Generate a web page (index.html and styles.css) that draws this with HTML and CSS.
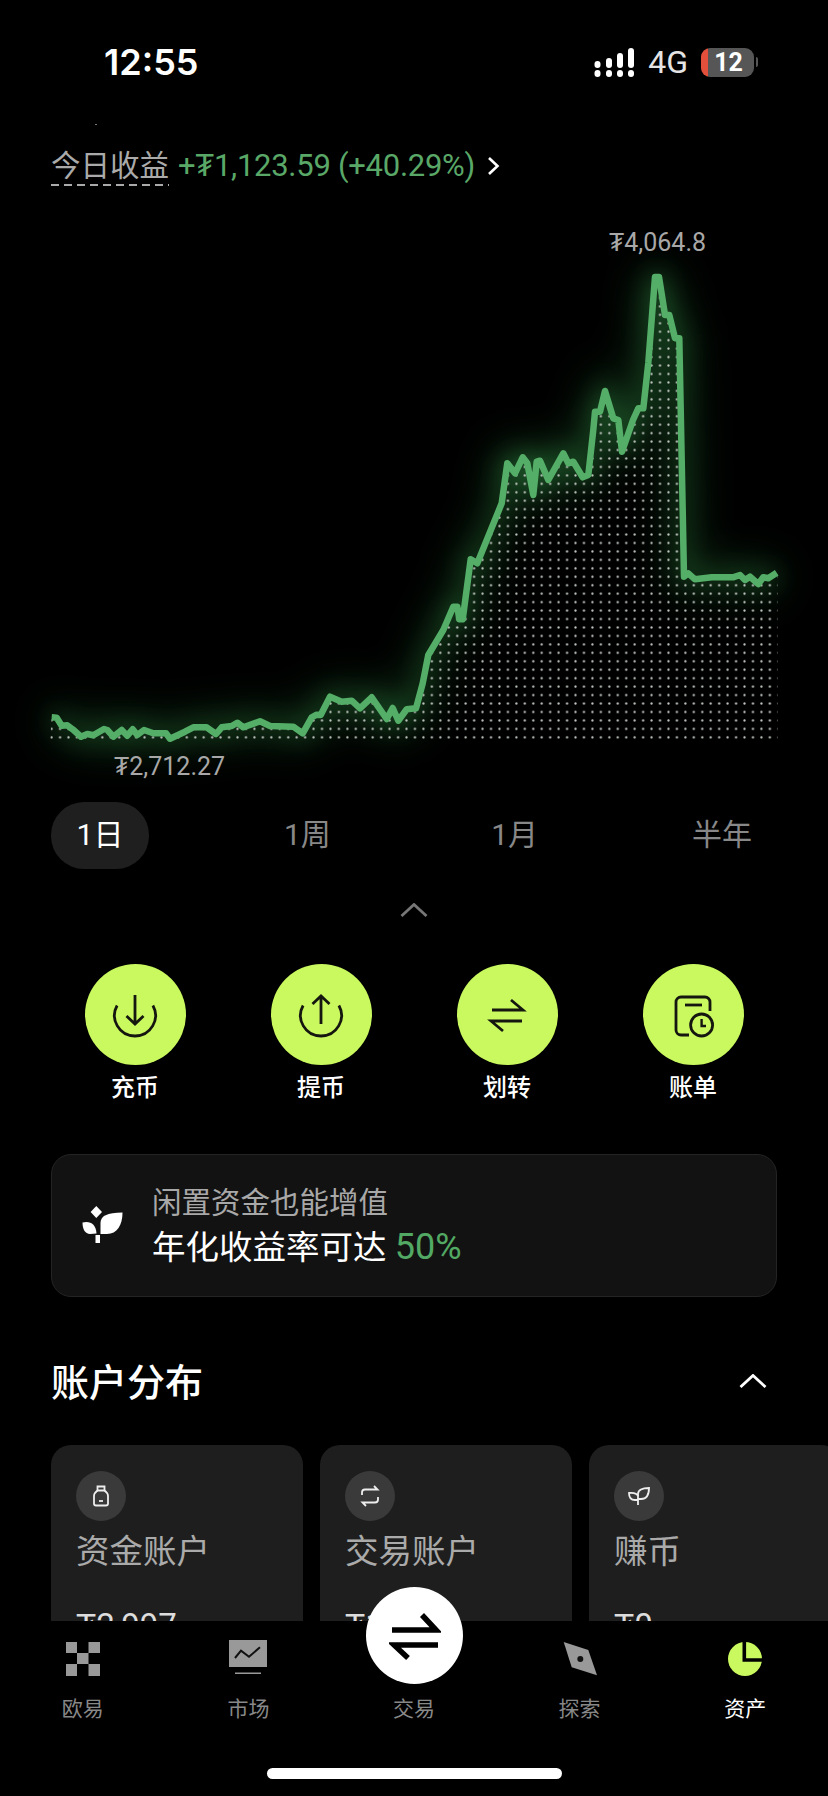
FILE: index.html
```html
<!DOCTYPE html>
<html>
  <head>
    <meta charset="utf-8" />
    <title>资产</title>
    <link rel="stylesheet" href="styles.css">
  </head>

  <body>
    <div id="screen">
      <div class="status-bar">
        <span class="status-time">12:55</span>
        <div class="status-right">
          <svg class="signal" viewBox="0 0 41 29" width="41" height="29">
            <g fill="#fff">
              <rect x="0.5" y="13" width="6" height="7" rx="3"/><rect x="0.5" y="22" width="6" height="7" rx="3"/>
              <rect x="12" y="10" width="6" height="10" rx="3"/><rect x="12" y="22" width="6" height="7" rx="3"/>
              <rect x="23" y="5" width="6" height="15" rx="3"/><rect x="23" y="22" width="6" height="7" rx="3"/>
              <rect x="34" y="0" width="6" height="20" rx="3"/><rect x="34" y="22" width="6" height="7" rx="3"/>
            </g>
          </svg>
          <span class="network">4G</span>
          <div class="battery"><span class="battery-num">12</span></div>
          <span class="battery-nub"></span>
        </div>
      </div>
      <span class="speck"></span>

      <div class="summary">
        <span class="summary-label">今日收益</span>
        <span class="summary-value">+₮1,123.59 (+40.29%)</span>
        <svg class="summary-arrow" viewBox="0 0 13 20" width="13" height="20">
          <path d="M2 2 L10.5 10 L2 18" fill="none" stroke="#fff" stroke-width="2.6"/>
        </svg>
      </div>

      <div class="chart">
        <svg class="chart-svg" viewBox="0 200 828 590" width="828" height="590">
          <defs>
            <path id="line" d="M51.7 717.3 L56.7 717.7 L61.7 725.7 L67.3 725.3 L72.7 729.3 L81 736.7 L87.3 734 L93.3 735.3 L104 729 L107.3 730 L113.3 736.7 L121.7 730 L127.3 735.7 L132.7 729.3 L137.3 735 L144 730 L153.3 733.3 L166 733.3 L170 738.7 L185 731.7 L193.3 727.3 L206.7 727.3 L216 734 L221.7 727.3 L231.7 726 L237.3 722.7 L243.3 727.3 L260 721.3 L270 726 L293.3 726.7 L302.7 733.3 L311.7 717.3 L316.7 714.7 L320.7 715 L330 696.7 L341.7 701.7 L351.7 700.7 L360 708.3 L371.7 697.3 L386.7 719 L392.7 708 L398.3 720.7 L406.7 709.3 L416 708.3 L422.7 683.3 L428.3 655 L443.3 630 L453.3 606.7 L457.3 606.7 L459.3 619.3 L462.7 619.3 L470.7 559.3 L477.3 563.3 L501.7 503.3 L507.3 463.3 L515 473.3 L522.7 457.3 L527.3 463.3 L533.3 495 L536.7 461.7 L540 460.7 L548.3 480 L563.3 453.3 L568.3 463.3 L573.3 461.7 L582.7 477.3 L588.3 475 L593.3 430 L595 411.7 L600 411.7 L605 391 L613.3 418.3 L618.3 420 L622 451.7 L633 420 L638.3 408.3 L643.3 408.3 L648.3 363 L655 277 L659 277 L665 315 L669.3 315 L675 338.3 L679.3 338.3 L684 576.7 L688.3 573.3 L695 579.3 L711.7 577.3 L733 577.3 L740 575 L745 580 L750 576.7 L758.3 584 L763.3 577.3 L768.3 578.3 L776.7 572.7"/>
            <pattern id="dots" patternUnits="userSpaceOnUse" x="47.4" y="733.1" width="8.45" height="8.45">
              <circle cx="4.22" cy="4.22" r="1.1" fill="#c4c9c4"/>
            </pattern>
            <clipPath id="under-line">
              <path d="M51.7 717.3 L56.7 717.7 L61.7 725.7 L67.3 725.3 L72.7 729.3 L81 736.7 L87.3 734 L93.3 735.3 L104 729 L107.3 730 L113.3 736.7 L121.7 730 L127.3 735.7 L132.7 729.3 L137.3 735 L144 730 L153.3 733.3 L166 733.3 L170 738.7 L185 731.7 L193.3 727.3 L206.7 727.3 L216 734 L221.7 727.3 L231.7 726 L237.3 722.7 L243.3 727.3 L260 721.3 L270 726 L293.3 726.7 L302.7 733.3 L311.7 717.3 L316.7 714.7 L320.7 715 L330 696.7 L341.7 701.7 L351.7 700.7 L360 708.3 L371.7 697.3 L386.7 719 L392.7 708 L398.3 720.7 L406.7 709.3 L416 708.3 L422.7 683.3 L428.3 655 L443.3 630 L453.3 606.7 L457.3 606.7 L459.3 619.3 L462.7 619.3 L470.7 559.3 L477.3 563.3 L501.7 503.3 L507.3 463.3 L515 473.3 L522.7 457.3 L527.3 463.3 L533.3 495 L536.7 461.7 L540 460.7 L548.3 480 L563.3 453.3 L568.3 463.3 L573.3 461.7 L582.7 477.3 L588.3 475 L593.3 430 L595 411.7 L600 411.7 L605 391 L613.3 418.3 L618.3 420 L622 451.7 L633 420 L638.3 408.3 L643.3 408.3 L648.3 363 L655 277 L659 277 L665 315 L669.3 315 L675 338.3 L679.3 338.3 L684 576.7 L688.3 573.3 L695 579.3 L711.7 577.3 L733 577.3 L740 575 L745 580 L750 576.7 L758.3 584 L763.3 577.3 L768.3 578.3 L777.5 572.7 L777.5 742 L50 742 Z"/>
            </clipPath>
            <filter id="glow-wide" x="-20%" y="-20%" width="140%" height="140%"><feGaussianBlur stdDeviation="22"/></filter>
            <filter id="glow-near" x="-10%" y="-10%" width="120%" height="120%"><feGaussianBlur stdDeviation="12"/></filter>
          </defs>
          <use href="#line" fill="none" stroke="#3cb054" stroke-width="16" opacity="0.38" filter="url(#glow-wide)"/>
          <use href="#line" fill="none" stroke="#3cb054" stroke-width="8" opacity="0.4" filter="url(#glow-near)"/>
          <rect x="48" y="270" width="732" height="472" fill="url(#dots)" clip-path="url(#under-line)"/>
          <use href="#line" fill="none" stroke="#54ae67" stroke-width="6.5" stroke-linejoin="round"/>
        </svg>
        <span class="chart-label chart-high">₮4,064.8</span>
        <span class="chart-label chart-low">₮2,712.27</span>
      </div>

      <div class="ranges">
        <span class="range active">1日</span>
        <span class="range">1周</span>
        <span class="range">1月</span>
        <span class="range">半年</span>
      </div>

      <svg class="collapse" viewBox="0 0 28 14" width="28" height="14">
        <path d="M1.5 13 L14 1.5 L26.5 13" fill="none" stroke="#777" stroke-width="2.8"/>
      </svg>

      <div class="actions">
        <div class="action">
          <div class="action-circle">
            <svg viewBox="0 0 48 48" width="48" height="48" fill="none" stroke="#15160f" stroke-width="2.8">
              <path d="M6.1 14.5 A20.5 20.5 0 1 0 41.9 14.5"/>
              <path d="M24 4 V33 M15.5 25 L24 33 L32.5 25"/>
            </svg>
          </div>
          <span class="action-name">充币</span>
        </div>
        <div class="action">
          <div class="action-circle">
            <svg viewBox="0 0 48 48" width="48" height="48" fill="none" stroke="#15160f" stroke-width="2.8">
              <path d="M6.1 14.5 A20.5 20.5 0 1 0 41.9 14.5"/>
              <path d="M24 5 V33 M15.5 13 L24 5 L32.5 13"/>
            </svg>
          </div>
          <span class="action-name">提币</span>
        </div>
        <div class="action">
          <div class="action-circle">
            <svg viewBox="0 0 48 48" width="48" height="48" fill="none" stroke="#15160f" stroke-width="2.8">
              <path d="M28 9 L40 19 H9"/>
              <path d="M39 30 H8 L20 40"/>
            </svg>
          </div>
          <span class="action-name">划转</span>
        </div>
        <div class="action">
          <div class="action-circle">
            <svg viewBox="0 0 48 48" width="48" height="48" fill="none" stroke="#15160f" stroke-width="2.8">
              <path d="M41 20 V11 A5 5 0 0 0 36 6 H12 A5 5 0 0 0 7 11 V39 A5 5 0 0 0 12 44 H20"/>
              <path d="M16 14 H33"/>
              <circle cx="32.6" cy="34" r="11"/>
              <path d="M32.6 28 V35 H37" stroke-width="2.4"/>
            </svg>
          </div>
          <span class="action-name">账单</span>
        </div>
      </div>

      <div class="banner">
        <svg class="banner-icon" viewBox="0 0 44 42" width="44" height="42" fill="#fff">
          <path d="M15.3 1 L21 7 L15.3 13 L9.6 7 Z"/>
          <path d="M19.5 29 V18 C19.5 11 26 7.5 41.5 7.5 C41.5 20 36 29 26 29 Z"/>
          <path d="M1.5 17.5 C9 15.5 15 19 15.5 28.5 L9 29 C4 29 1.5 24 1.5 17.5 Z"/>
          <rect x="14.5" y="30" width="4.5" height="8"/>
        </svg>
        <div class="banner-text">
          <div class="banner-top">闲置资金也能增值</div>
          <div class="banner-main">年化收益率可达 <span class="banner-rate">50%</span></div>
        </div>
      </div>

      <div class="section-head">
        <h2 class="section-title">账户分布</h2>
        <svg viewBox="0 0 28 14" width="28" height="14">
          <path d="M1.5 13 L14 1.5 L26.5 13" fill="none" stroke="#fff" stroke-width="2.8"/>
        </svg>
      </div>

      <div class="cards">
        <div class="card">
          <div class="card-icon">
            <svg viewBox="0 0 24 24" width="24" height="24" fill="none" stroke="#eee" stroke-width="1.8">
              <path d="M8.5 2.5 H15.5 V6.5 H8.5 Z"/>
              <path d="M8.5 6.5 C6.5 8 5 9.5 5 12 V19.5 A2 2 0 0 0 7 21.5 H17 A2 2 0 0 0 19 19.5 V12 C19 9.5 17.5 8 15.5 6.5"/>
              <path d="M10 17 H14"/>
            </svg>
          </div>
          <div class="card-name">资金账户</div>
          <div class="card-value">₮2,997</div>
        </div>
        <div class="card">
          <div class="card-icon">
            <svg viewBox="0 0 24 24" width="24" height="24" fill="none" stroke="#eee" stroke-width="1.8">
              <path d="M16 2 L19.5 5.5 H7 A3 3 0 0 0 4 8.5 V11"/>
              <path d="M8 22 L4.5 18.5 H17 A3 3 0 0 0 20 15.5 V13"/>
            </svg>
          </div>
          <div class="card-name">交易账户</div>
          <div class="card-value">₮1,067</div>
        </div>
        <div class="card">
          <div class="card-icon">
            <svg viewBox="0 0 24 24" width="24" height="24" fill="none" stroke="#eee" stroke-width="1.8">
              <path d="M11 21 V10 C11 6 15 4 22 4 C22 11 19 15 14 15 H11"/>
              <path d="M11 12 C10 9.5 7 8.5 2 9 C2 13 4 16 8 16 H11"/>
            </svg>
          </div>
          <div class="card-name">赚币</div>
          <div class="card-value">₮0</div>
        </div>
      </div>

      <div class="tabbar">
        <div class="tabs">
          <div class="tab">
            <div class="tab-icon">
              <svg viewBox="0 0 34 34" width="34" height="34" fill="#999">
                <rect x="0" y="0" width="11" height="11"/><rect x="22.5" y="0" width="11.5" height="11"/>
                <rect x="11" y="11" width="11.5" height="11"/>
                <rect x="0" y="22" width="11" height="12"/><rect x="22.5" y="22" width="11.5" height="12"/>
              </svg>
            </div>
            <span class="tab-name">欧易</span>
          </div>
          <div class="tab">
            <div class="tab-icon tab-icon-market">
              <svg viewBox="0 0 38 34" width="38" height="34">
                <rect x="0" y="0" width="38" height="27" fill="#999"/>
                <path d="M6 18 L12 10.7 L20 16.7 L31 7.3" fill="none" stroke="#111" stroke-width="2"/>
                <rect x="6" y="32.5" width="26" height="1.5" fill="#999"/>
              </svg>
            </div>
            <span class="tab-name">市场</span>
          </div>
          <div class="tab">
            <div class="tab-icon"></div>
            <span class="tab-name">交易</span>
          </div>
          <div class="tab">
            <div class="tab-icon">
              <svg viewBox="0 0 34 34" width="34" height="34">
                <path d="M0.7 0 L25.3 8 L34 33.3 L8.7 25.3 Z" fill="#999"/>
                <circle cx="17.3" cy="17" r="3" fill="#111"/>
              </svg>
            </div>
            <span class="tab-name">探索</span>
          </div>
          <div class="tab">
            <div class="tab-icon">
              <svg viewBox="0 0 34 34" width="34" height="34">
                <circle cx="17" cy="17" r="17" fill="#c9f95f"/>
                <path d="M16.3 -1 V18 H35" fill="none" stroke="#000" stroke-width="3.6"/>
              </svg>
            </div>
            <span class="tab-name current">资产</span>
          </div>
        </div>
        <div class="trade-button">
          <svg viewBox="0 0 52 48" width="52" height="48" fill="none" stroke="#000" stroke-width="5.5">
            <path d="M33 3 L47 18 H3"/>
            <path d="M49 33 H5 L19 46"/>
          </svg>
        </div>
        <div class="home-bar"></div>
      </div>
    </div>
  </body>
</html>
```

FILE: styles.css
```css
* {
  box-sizing: border-box;
}

body {
  margin: 0;
  background: #000;
  color: #fff;
  font-family: Roboto, "Noto Sans CJK SC", sans-serif;
}

#screen {
  position: relative;
  width: 828px;
  height: 1796px;
  overflow: hidden;
  background: #000;
}

/* status bar */
.status-bar {
  display: flex;
  justify-content: space-between;
  align-items: center;
  height: 124px;
  padding: 0 70px 0 104px;
}

.status-time {
  font-family: Inter, sans-serif;
  font-size: 36px;
  font-weight: 600;
}

.status-right {
  display: flex;
  align-items: center;
}

.network {
  margin: 0 13px 0 13px;
  font-size: 32px;
  color: #e4e4e4;
}

.battery {
  display: flex;
  justify-content: center;
  align-items: center;
  width: 53px;
  height: 29px;
  padding-left: 2px;
  border-radius: 9px;
  background: linear-gradient(to right, #e2503c 7px, #565656 7px);
}

.battery-num {
  font-size: 25px;
  font-weight: 700;
}

.battery-nub {
  width: 2px;
  height: 10px;
  margin-left: 2px;
  border-radius: 0 2px 2px 0;
  background: #565656;
}

.speck {
  position: absolute;
  top: 124px;
  left: 95px;
  width: 2px;
  height: 1px;
  background: #777;
}

/* today's earnings */
.summary {
  display: flex;
  align-items: flex-start;
  height: 37px;
  margin-top: 24px;
  padding-left: 51px;
}

.summary-label {
  height: 38px;
  font-size: 29.5px;
  line-height: 36px;
  color: #aaa;
  background: repeating-linear-gradient(to right, #aaa 0, #aaa 8px, transparent 8px, transparent 13px) left bottom / 100% 2px no-repeat;
}

.summary-value {
  margin-left: 9px;
  font-size: 31px;
  line-height: 36px;
  letter-spacing: -0.28px;
  color: #5aa868;
}

.summary-arrow {
  margin: 8px 0 0 12px;
}

/* chart */
.chart {
  position: relative;
  height: 590px;
  margin-top: 15px;
}

.chart-svg {
  display: block;
}

.chart-label {
  position: absolute;
  font-size: 25px;
  line-height: 30px;
  color: #a8a8a8;
}

.chart-high {
  top: 28px;
  left: 609px;
}

.chart-low {
  top: 552px;
  left: 114px;
}

/* range switch */
.ranges {
  display: flex;
  justify-content: space-between;
  margin: 12px 57px 0 51px;
}

.range {
  width: 98px;
  height: 67px;
  border-radius: 33px;
  font-size: 30px;
  line-height: 65px;
  text-align: center;
  color: #888;
}

.range.active {
  background: #1f1f1f;
  color: #fff;
}

.collapse {
  display: block;
  margin: 34px 0 0 400px;
}

/* deposit, withdraw ... */
.actions {
  display: grid;
  grid-template-columns: repeat(4, 1fr);
  margin-top: 47px;
  padding: 0 42px 0 42px;
}

.action {
  display: flex;
  flex-direction: column;
  align-items: center;
}

.action-circle {
  display: flex;
  justify-content: center;
  align-items: center;
  width: 101px;
  height: 101px;
  border-radius: 50%;
  background: #c9f95f;
}

.action-name {
  margin-top: 10px;
  font-size: 24px;
  line-height: 26px;
  font-weight: 500;
}

/* promo banner */
.banner {
  display: flex;
  align-items: center;
  height: 143px;
  margin: 53px 51px 0;
  padding-left: 29px;
  border: 1px solid #242424;
  border-radius: 20px;
  background: #121212;
}

.banner-icon {
  margin-right: 27px;
}

.banner-text {
  padding-top: 2px;
}

.banner-top {
  font-size: 29.5px;
  line-height: 38px;
  color: #a8a8a8;
}

.banner-main {
  margin-top: 4px;
  font-size: 33.5px;
  line-height: 42px;
}

.banner-rate {
  font-size: 36px;
  color: #52a963;
}

/* accounts */
.section-head {
  display: flex;
  justify-content: space-between;
  align-items: center;
  height: 50px;
  margin: 59px 61px 0 51px;
}

.section-title {
  margin: 0;
  padding-bottom: 4px;
  font-size: 38px;
  font-weight: 500;
}

.cards {
  display: flex;
  gap: 17px;
  margin-top: 39px;
  padding-left: 51px;
}

.card {
  flex: 0 0 252px;
  height: 260px;
  padding: 26px 25px;
  border-radius: 20px;
  background: #1e1e1e;
}

.card-icon {
  display: flex;
  justify-content: center;
  align-items: center;
  width: 50px;
  height: 50px;
  border-radius: 50%;
  background: #3a3a3a;
}

.card-name {
  margin-top: 9px;
  font-size: 33.5px;
  line-height: 44px;
  color: #aaa;
}

.card-value {
  margin-top: 32px;
  font-size: 33px;
  line-height: 40px;
  color: #ddd;
}

/* bottom bar */
.tabbar {
  position: absolute;
  left: 0;
  right: 0;
  bottom: 0;
  height: 175px;
  background: #000;
}

.tabs {
  display: grid;
  grid-template-columns: repeat(5, 1fr);
  padding-top: 21px;
}

.tab {
  display: flex;
  flex-direction: column;
  align-items: center;
}

.tab-icon {
  height: 36px;
}

.tab-icon svg {
  display: block;
}

.tab-icon-market svg {
  margin-top: -2px;
}

.tab-name {
  margin-top: 19px;
  font-size: 21px;
  line-height: 24px;
  color: #888;
}

.tab-name.current {
  color: #fff;
}

.trade-button {
  position: absolute;
  top: -34px;
  left: 366px;
  display: flex;
  justify-content: center;
  align-items: center;
  width: 97px;
  height: 97px;
  border-radius: 50%;
  background: #fff;
}

.home-bar {
  position: absolute;
  top: 147px;
  left: 267px;
  width: 295px;
  height: 11px;
  border-radius: 6px;
  background: #fff;
}
```
